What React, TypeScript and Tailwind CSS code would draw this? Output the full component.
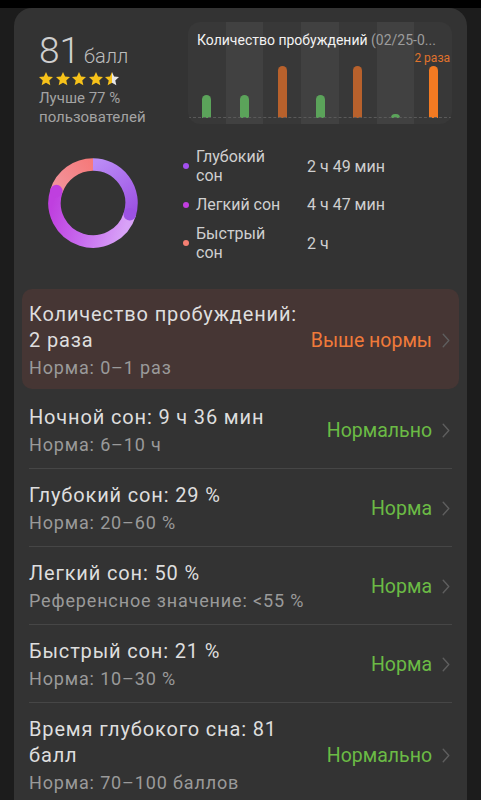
import React from "react";

const Chevron = () => (
  <svg width="8" height="15" viewBox="0 0 8 15" className="ml-[10px] shrink-0">
    <path d="M1.2 1.2 L6.8 7.5 L1.2 13.8" fill="none" stroke="#5e5e5e" strokeWidth="1.4" strokeLinecap="round" strokeLinejoin="round" />
  </svg>
);

const Star = ({ half = false, id }: { half?: boolean; id: string }) => (
  <svg width="16" height="16" viewBox="0 0 24 24">
    {half && (
      <defs>
        <linearGradient id={id} x1="0" x2="1" y1="0" y2="0">
          <stop offset="0.5" stopColor="#f7c21a" />
          <stop offset="0.5" stopColor="#e6e6e6" />
        </linearGradient>
      </defs>
    )}
    <path
      d="M12 1.5 L15.1 8.3 L22.5 9.1 L16.9 14.1 L18.5 21.5 L12 17.7 L5.5 21.5 L7.1 14.1 L1.5 9.1 L8.9 8.3 Z"
      fill={half ? `url(#${id})` : "#f7c21a"}
    />
  </svg>
);

function pt(a: number, r: number, c: number) {
  const rad = (a * Math.PI) / 180;
  return [c + r * Math.sin(rad), c - r * Math.cos(rad)];
}
function arc(a1: number, a2: number, r: number, c: number) {
  const [x1, y1] = pt(a1, r, c);
  const [x2, y2] = pt(a2, r, c);
  const large = a2 - a1 > 180 ? 1 : 0;
  return `M ${x1} ${y1} A ${r} ${r} 0 ${large} 1 ${x2} ${y2}`;
}

const Donut = () => {
  const c = 45;
  const r = 38.5;
  const sw = 12.5;
  const deepEnd = 107;
  const lightEnd = 288;
  const [dx, dy] = pt(deepEnd, r, c);
  const [lx, ly] = pt(lightEnd, r, c);
  const [d0x, d0y] = pt(0, r, c);
  const [l0x, l0y] = pt(deepEnd, r, c);
  const [r0x, r0y] = pt(lightEnd, r, c);
  return (
    <svg width="90" height="90" viewBox="0 0 90 90">
      <defs>
        <linearGradient id="gDeep" gradientUnits="userSpaceOnUse" x1={d0x} y1={d0y} x2={dx} y2={dy}>
          <stop offset="0" stopColor="#bb8cf6" />
          <stop offset="1" stopColor="#9c52e3" />
        </linearGradient>
        <linearGradient id="gLight" gradientUnits="userSpaceOnUse" x1={l0x} y1={l0y} x2={lx} y2={ly}>
          <stop offset="0" stopColor="#d8a2f7" />
          <stop offset="0.5" stopColor="#c86cef" />
          <stop offset="1" stopColor="#bf3fdf" />
        </linearGradient>
        <linearGradient id="gRem" gradientUnits="userSpaceOnUse" x1={r0x} y1={r0y} x2={d0x} y2={d0y}>
          <stop offset="0" stopColor="#f2949c" />
          <stop offset="1" stopColor="#f67a7a" />
        </linearGradient>
      </defs>
      <path d={arc(lightEnd, 360, r, c)} fill="none" stroke="url(#gRem)" strokeWidth={sw} />
      <path d={arc(deepEnd, lightEnd, r, c)} fill="none" stroke="url(#gLight)" strokeWidth={sw} />
      <circle cx={lx} cy={ly} r={sw / 2} fill="#bf3fdf" />
      <path d={arc(0, deepEnd, r, c)} fill="none" stroke="url(#gDeep)" strokeWidth={sw} />
      <circle cx={dx} cy={dy} r={sw / 2} fill="#9c52e3" />
    </svg>
  );
};

const bars = [
  { h: 23, c: "#5ba35a" },
  { h: 23, c: "#5ba35a" },
  { h: 52, c: "#b8612c" },
  { h: 23, c: "#5ba35a" },
  { h: 52, c: "#b8612c" },
  { h: 4, c: "#5ba35a" },
  { h: 52, c: "#f37a22" },
];

const Chart = () => (
  <div className="relative w-[264px] h-[102px] rounded-[12px] overflow-hidden flex">
    {bars.map((b, i) => (
      <div
        key={i}
        className={`flex-1 flex items-end justify-center pb-[6px] ${i % 2 === 1 ? "bg-[#414141]" : "bg-[#383838]"}`}
      >
        <div className="w-[9px] rounded-t-full" style={{ height: b.h, backgroundColor: b.c }} />
      </div>
    ))}
    <div className="absolute left-0 right-0 bottom-[6px] border-t border-dashed border-[#5a5a5a]" />
    <div className="absolute left-[9px] top-[9px] text-[14px] leading-[18px] whitespace-nowrap">
      <span className="text-[#f2f2f2]">Количество пробуждений </span>
      <span className="text-[#9c9c9c]">(02/25-0...</span>
    </div>
    <div className="absolute right-[2px] top-[28px] text-[12px] leading-[16px] text-[#e0732c]">2 раза</div>
  </div>
);

const LegendRow = ({ color, label, value }: { color: string; label: string; value: string }) => (
  <div className="flex items-center">
    <div className="w-[6px] h-[6px] rounded-full shrink-0" style={{ backgroundColor: color }} />
    <div className="ml-[7px] w-[92px] text-[16px] leading-[19px] text-[#cfcfcf]">{label}</div>
    <div className="ml-[19px] text-[16px] leading-[19px] text-[#cfcfcf] whitespace-nowrap">{value}</div>
  </div>
);

type RowProps = { title: React.ReactNode; sub: string; status: string; statusColor: string; last?: boolean };

const Row = ({ title, sub, status, statusColor, last }: RowProps) => (
  <div className={`flex items-center pt-[13px] pb-[11px] ${last ? "" : "border-b border-[#464646]"}`}>
    <div className="flex-1 min-w-0">
      <div className="text-[20px] leading-[26px] tracking-[0.85px] text-[#dedede]">{title}</div>
      <div className="mt-[3px] text-[18px] leading-[24px] tracking-[0.85px] text-[#9a9a9a]">{sub}</div>
    </div>
    <div className="flex items-center pr-[2px]">
      <span className="text-[19.5px] leading-[24px]" style={{ color: statusColor }}>{status}</span>
      <Chevron />
    </div>
  </div>
);

export default function App() {
  const green = "#6bbb45";
  return (
    <div className="w-[481px] h-[800px] bg-[#1c1c1c] overflow-hidden" style={{ fontFamily: "Roboto, 'Noto Sans', sans-serif" }}>
      <div className="h-[8px] bg-black" />
      <div className="mx-[14px] bg-[#333333] rounded-t-[18px] h-[792px]">
        <div className="flex justify-between pl-[25px] pr-[15px] pt-[14px]">
          <div className="pt-[9px]">
            <div className="flex items-baseline text-[#cfcfcf]">
              <span className="text-[37px] leading-[40px] font-light">81</span>
              <span className="ml-[4px] text-[20px] leading-[24px] font-light text-[#bdbdbd]">балл</span>
            </div>
            <div className="flex gap-[0.5px] mt-[0px] -ml-[1px]">
              <Star id="s1" />
              <Star id="s2" />
              <Star id="s3" />
              <Star id="s4" />
              <Star id="s5" half />
            </div>
            <div className="mt-[2px] text-[15px] leading-[19px] text-[#a3a3a3]">
              Лучше 77 %
              <br />
              пользователей
            </div>
          </div>
          <Chart />
        </div>

        <div className="flex items-center mt-[20px]">
          <div className="ml-[34px] pb-[4px]">
            <Donut />
          </div>
          <div className="ml-[45px] flex flex-col gap-[10px]">
            <LegendRow color="#a34ff0" label="Глубокий сон" value="2 ч 49 мин" />
            <LegendRow color="#c23ee0" label="Легкий сон" value="4 ч 47 мин" />
            <LegendRow color="#f57f72" label="Быстрый сон" value="2 ч" />
          </div>
        </div>

        <div className="mt-[27px] mx-[8px] px-[7px] bg-[#463634] rounded-[10px] flex items-center pt-[12px] pb-[9px]">
          <div className="flex-1 min-w-0">
            <div className="text-[20px] leading-[26px] tracking-[0.85px] text-[#dedede]">
              Количество пробуждений:
              <br />2 раза
            </div>
            <div className="mt-[3px] text-[18px] leading-[24px] tracking-[0.85px] text-[#9a9a9a]">Норма: 0–1 раз</div>
          </div>
          <div className="flex items-center pr-[2px]">
            <span className="text-[19.5px] leading-[24px] text-[#f07a3a]">Выше нормы</span>
            <Chevron />
          </div>
        </div>

        <div className="px-[15px] mt-[2px]">
          <Row title="Ночной сон: 9 ч 36 мин" sub="Норма: 6–10 ч" status="Нормально" statusColor={green} />
          <Row title="Глубокий сон: 29 %" sub="Норма: 20–60 %" status="Норма" statusColor={green} />
          <Row title="Легкий сон: 50 %" sub="Референсное значение: <55 %" status="Норма" statusColor={green} />
          <Row title="Быстрый сон: 21 %" sub="Норма: 10–30 %" status="Норма" statusColor={green} />
          <Row
            title={
              <>
                Время глубокого сна: 81
                <br />
                балл
              </>
            }
            sub="Норма: 70–100 баллов"
            status="Нормально"
            statusColor={green}
            last
          />
        </div>
      </div>
    </div>
  );
}
